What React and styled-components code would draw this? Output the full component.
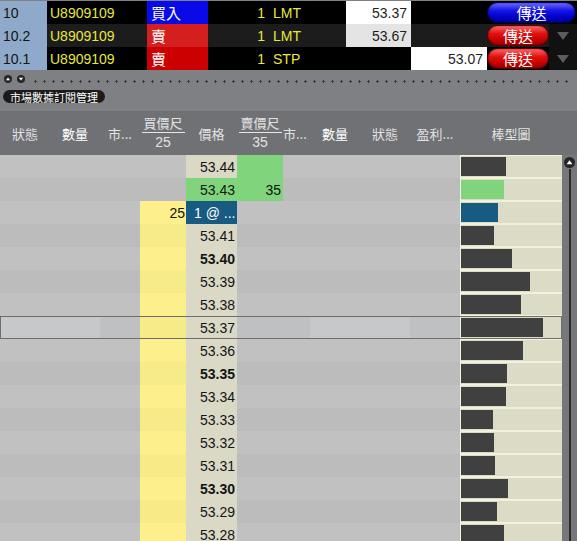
import React from "react";
import styled, { createGlobalStyle, css } from "styled-components";

const GlobalStyle = createGlobalStyle`
  html, body {
    margin: 0;
    padding: 0;
    background: #7e7f83;
  }
  body {
    font-family: "Liberation Sans", "Noto Sans CJK TC", Arial, sans-serif;
  }
`;

const orders = [
  { id: "10", side: "買入", sideBg: "#0a0ae8", type: "LMT", price: "53.37", priceBg: "#ffffff", aux: "", auxBg: "transparent", rowBg: "#000", btn: "blue" },
  { id: "10.2", side: "賣", sideBg: "#d41f1f", type: "LMT", price: "53.67", priceBg: "#e4e4e4", aux: "", auxBg: "transparent", rowBg: "#1c1c1c", btn: "red" },
  { id: "10.1", side: "賣", sideBg: "#cc0000", type: "STP", price: "", priceBg: "transparent", aux: "53.07", auxBg: "#ffffff", rowBg: "#000", btn: "red" },
];

const ladder = [
  { price: "53.44", bar: 45, ask: "" },
  { price: "53.43", bar: 43, ask: "35", tone: "ask" },
  { price: "1 @ ...", bar: 37, bid: "25", tone: "order" },
  { price: "53.41", bar: 33 },
  { price: "53.40", bar: 51 },
  { price: "53.39", bar: 69 },
  { price: "53.38", bar: 60 },
  { price: "53.37", bar: 82, selected: true },
  { price: "53.36", bar: 62 },
  { price: "53.35", bar: 46 },
  { price: "53.34", bar: 45 },
  { price: "53.33", bar: 32 },
  { price: "53.32", bar: 33 },
  { price: "53.31", bar: 34 },
  { price: "53.30", bar: 47 },
  { price: "53.29", bar: 36 },
  { price: "53.28", bar: 43 },
];

const LADDER_COLS = "50px 50px 40px 46px 51px 46px 27px 50px 50px 50px 102px";

const App = () => {
  return (
    <>
      <GlobalStyle />
      <Window>
        {/* working orders */}
        <Orders>
          {orders.map((o) => (
            <OrderRow key={o.id} $bg={o.rowBg}>
              <IdCell>{o.id}</IdCell>
              <AcctCell>U8909109</AcctCell>
              <SideCell $bg={o.sideBg}>{o.side}</SideCell>
              <QtyCell>1</QtyCell>
              <TypeCell>{o.type}</TypeCell>
              <PriceCell $bg={o.priceBg}>{o.price}</PriceCell>
              <PriceCell $bg={o.auxBg}>{o.aux}</PriceCell>
              <SendCell>
                <SendButton $color={o.btn} $wide={o.btn === "blue"}>傳送</SendButton>
                {o.btn !== "blue" && (
                  <DropArrow>
                    <svg width="12" height="8" viewBox="0 0 12 8">
                      <path d="M0 0h12L6 8z" fill="#5c5c5c" />
                    </svg>
                  </DropArrow>
                )}
              </SendCell>
            </OrderRow>
          ))}
        </Orders>

        {/* splitter + tab */}
        <Toolbar>
          <ArrowRow>
            <RoundBtn>
              <svg width="8" height="8" viewBox="0 0 8 8">
                <circle cx="4" cy="4" r="4" fill="#262626" />
                <path d="M1.8 5.3h4.4L4 2.4z" fill="#fff" />
              </svg>
            </RoundBtn>
            <RoundBtn>
              <svg width="8" height="8" viewBox="0 0 8 8">
                <circle cx="4" cy="4" r="4" fill="#262626" />
                <path d="M1.8 2.7h4.4L4 5.6z" fill="#fff" />
              </svg>
            </RoundBtn>
            <Dots />
          </ArrowRow>
          <Tab>市場數據訂閱管理</Tab>
        </Toolbar>

        {/* column headers */}
        <Header>
          <HeadCell>狀態</HeadCell>
          <HeadCell $strong>數量</HeadCell>
          <HeadCell>市...</HeadCell>
          <HeadCell>
            <HeadLabel>買價尺</HeadLabel>
            <HeadNum>25</HeadNum>
          </HeadCell>
          <HeadCell>價格</HeadCell>
          <HeadCell>
            <HeadLabel>賣價尺</HeadLabel>
            <HeadNum>35</HeadNum>
          </HeadCell>
          <HeadCell $clip>市...</HeadCell>
          <HeadCell $strong>數量</HeadCell>
          <HeadCell>狀態</HeadCell>
          <HeadCell>盈利...</HeadCell>
          <HeadCell>棒型圖</HeadCell>
          <span />
        </Header>

        {/* price ladder */}
        <Body>
          <Rows>
            {ladder.map((r, i) => (
              <LadderRow key={r.price} $alt={i % 2 === 1} $selected={r.selected}>
                <Cell $hl={r.selected} />
                <Cell $hl={r.selected} />
                <Cell />
                <BidCell $on={i >= 2} $alt={i % 2 === 1}>{r.bid}</BidCell>
                <LadderPrice
                  $tone={r.tone}
                  $bold={r.price.endsWith("0") || r.price.endsWith("5")}
                >
                  {r.price}
                </LadderPrice>
                <AskCell $on={r.ask !== undefined}>{r.ask}</AskCell>
                <Cell />
                <Cell $hl={r.selected} />
                <Cell $hl={r.selected} />
                <Cell />
                <BarCell>
                  <Bar $tone={r.tone} style={{ width: r.bar }} />
                </BarCell>
              </LadderRow>
            ))}
          </Rows>
          <Scroll>
            <svg width="11" height="11" viewBox="0 0 11 11">
              <circle cx="5.5" cy="5.5" r="5.5" fill="#252525" />
              <path d="M2.6 7.2h5.8L5.5 3.2z" fill="#fff" />
            </svg>
            <Track />
          </Scroll>
        </Body>
      </Window>
    </>
  );
};

export default App;

const Window = styled.div`
  width: 577px;
  height: 541px;
  overflow: hidden;
  background: #7e7f83;
  display: flex;
  flex-direction: column;
`;

/* ---------- orders ---------- */

const Orders = styled.div`
  padding-top: 1px;
  background: #808184;
`;

const OrderRow = styled.div`
  display: grid;
  grid-template-columns: 47px 100px 61px 60px 78px 65px 76px 90px;
  height: 23px;
  background: ${(p) => p.$bg};
  font-size: 14px;
`;

const cellBase = css`
  display: flex;
  align-items: center;
  white-space: nowrap;
  overflow: hidden;
`;

const IdCell = styled.div`
  ${cellBase};
  background: #8ea9c9;
  color: #141414;
  padding-left: 3px;
`;

const AcctCell = styled.div`
  ${cellBase};
  color: #e8e83a;
  padding-left: 3px;
`;

const SideCell = styled.div`
  ${cellBase};
  background: ${(p) => p.$bg};
  color: #fff;
  padding-left: 4px;
  font-size: 15px;
`;

const QtyCell = styled.div`
  ${cellBase};
  justify-content: flex-end;
  color: #e8e83a;
  padding-right: 3px;
`;

const TypeCell = styled.div`
  ${cellBase};
  color: #e8e83a;
  padding-left: 5px;
`;

const PriceCell = styled.div`
  ${cellBase};
  justify-content: flex-end;
  background: ${(p) => p.$bg};
  color: #1e1e1e;
  padding-right: 4px;
`;

const SendCell = styled.div`
  display: flex;
  align-items: center;
`;

const SendButton = styled.div`
  box-sizing: border-box;
  width: ${(p) => (p.$wide ? "89px" : "62px")};
  height: 21px;
  border-radius: 11px;
  display: flex;
  align-items: center;
  justify-content: center;
  color: #fff;
  font-size: 15px;
  font-family: "Noto Sans CJK TC", sans-serif;
  ${(p) =>
    p.$color === "blue"
      ? css`
          background: linear-gradient(#6a6aff 0%, #1515e6 40%, #0000c4 75%, #0000a0 100%);
          border: 1px solid #00005c;
        `
      : css`
          background: linear-gradient(#ff6a6a 0%, #e01212 40%, #c40000 75%, #a00000 100%);
          border: 1px solid #5c0000;
        `}
  box-shadow: inset 0 0 2px rgba(0, 0, 0, 0.5);
`;

const DropArrow = styled.div`
  flex: 1;
  align-self: stretch;
  background: #111;
  display: flex;
  align-items: center;
  justify-content: center;
`;

/* ---------- toolbar ---------- */

const Toolbar = styled.div`
  height: 41px;
  box-sizing: border-box;
  padding: 4px 3px 0 4px;
  background: #7f8084;
`;

const ArrowRow = styled.div`
  display: flex;
  align-items: flex-end;
  gap: 5px;
  height: 9px;
`;

const RoundBtn = styled.div`
  width: 8px;
  height: 8px;
  display: flex;
`;

const Dots = styled.div`
  flex: 1;
  height: 3px;
  margin-left: 1px;
  background-image: radial-gradient(circle, #2c2c2c 0.9px, transparent 1.3px);
  background-size: 9px 3px;
  background-repeat: repeat-x;
`;

const Tab = styled.div`
  display: inline-flex;
  align-items: center;
  margin-top: 7px;
  margin-left: -1px;
  height: 13px;
  padding: 0 7px;
  border-radius: 7px;
  background: #1b1b1b;
  color: #fff;
  font-size: 11px;
  font-family: "Noto Sans CJK TC", sans-serif;
`;

/* ---------- header ---------- */

const Header = styled.div`
  display: grid;
  grid-template-columns: ${LADDER_COLS} 15px;
  height: 44px;
  background: #707175;
`;

const HeadCell = styled.div`
  display: flex;
  flex-direction: column;
  align-items: center;
  justify-content: center;
  overflow: hidden;
  white-space: nowrap;
  color: ${(p) => (p.$strong ? "#ffffff" : "#e2e2e2")};
  font-size: 13px;
  font-family: "Noto Sans CJK TC", sans-serif;
  ${(p) =>
    p.$clip &&
    css`
      align-items: flex-start;
    `}
`;

const HeadLabel = styled.div`
  width: 43px;
  text-align: center;
  border-bottom: 1px solid #e6e6e6;
  padding-bottom: 1px;
  line-height: 16px;
`;

const HeadNum = styled.div`
  font-family: "Liberation Sans", sans-serif;
  font-size: 14px;
  line-height: 17px;
  margin-top: 1px;
`;

/* ---------- ladder ---------- */

const Body = styled.div`
  display: flex;
  flex: 1;
  overflow: hidden;
`;

const Rows = styled.div`
  width: 562px;
`;

const LadderRow = styled.div`
  position: relative;
  display: grid;
  grid-template-columns: ${LADDER_COLS};
  height: 23px;
  background: ${(p) => (p.$alt ? "#bcbcbc" : "#c1c1c1")};
  font-size: 14px;
  ${(p) =>
    p.$selected &&
    css`
      background: #bec0c2;
      &::after {
        content: "";
        position: absolute;
        inset: 0;
        border: 1px solid #6e6e6e;
        pointer-events: none;
      }
    `}
`;

const Cell = styled.div`
  ${cellBase};
  ${(p) => p.$hl && css`background: #c7c8ca;`}
`;

const BidCell = styled.div`
  ${cellBase};
  justify-content: flex-end;
  padding-right: 1px;
  color: #111;
  background: ${(p) => (p.$on ? (p.$alt ? "#f7eb89" : "#fdf08c") : "transparent")};
`;

const AskCell = styled.div`
  ${cellBase};
  justify-content: flex-end;
  padding-right: 2px;
  color: #111;
  background: ${(p) => (p.$on ? "#80d47c" : "transparent")};
`;

const toneBg = {
  ask: "#80d47c",
  order: "#175b82",
};

const LadderPrice = styled.div`
  ${cellBase};
  justify-content: ${(p) => (p.$tone === "order" ? "flex-start" : "flex-end")};
  padding: ${(p) => (p.$tone === "order" ? "0 0 0 8px" : "0 2px 0 0")};
  background: ${(p) => toneBg[p.$tone] || "#d9d9c6"};
  color: ${(p) => (p.$tone === "order" ? "#fff" : "#141414")};
  font-weight: ${(p) => (p.$bold ? 700 : 400)};
`;

const BarCell = styled.div`
  box-sizing: border-box;
  background: #dcdcc6;
  border-left: 1px solid #f1f1dc;
  border-top: 1px solid #f1f1dc;
  border-bottom: 1px solid #f1f1dc;
  padding: 1px 0;
  display: flex;
`;

const Bar = styled.div`
  height: 100%;
  background: ${(p) => toneBg[p.$tone] || "#404040"};
`;

const Scroll = styled.div`
  width: 15px;
  background: #76777b;
  display: flex;
  flex-direction: column;
  align-items: center;
  padding-top: 2px;
`;

const Track = styled.div`
  width: 2px;
  flex: 1;
  background: #2a2a2a;
  margin-top: 1px;
`;
